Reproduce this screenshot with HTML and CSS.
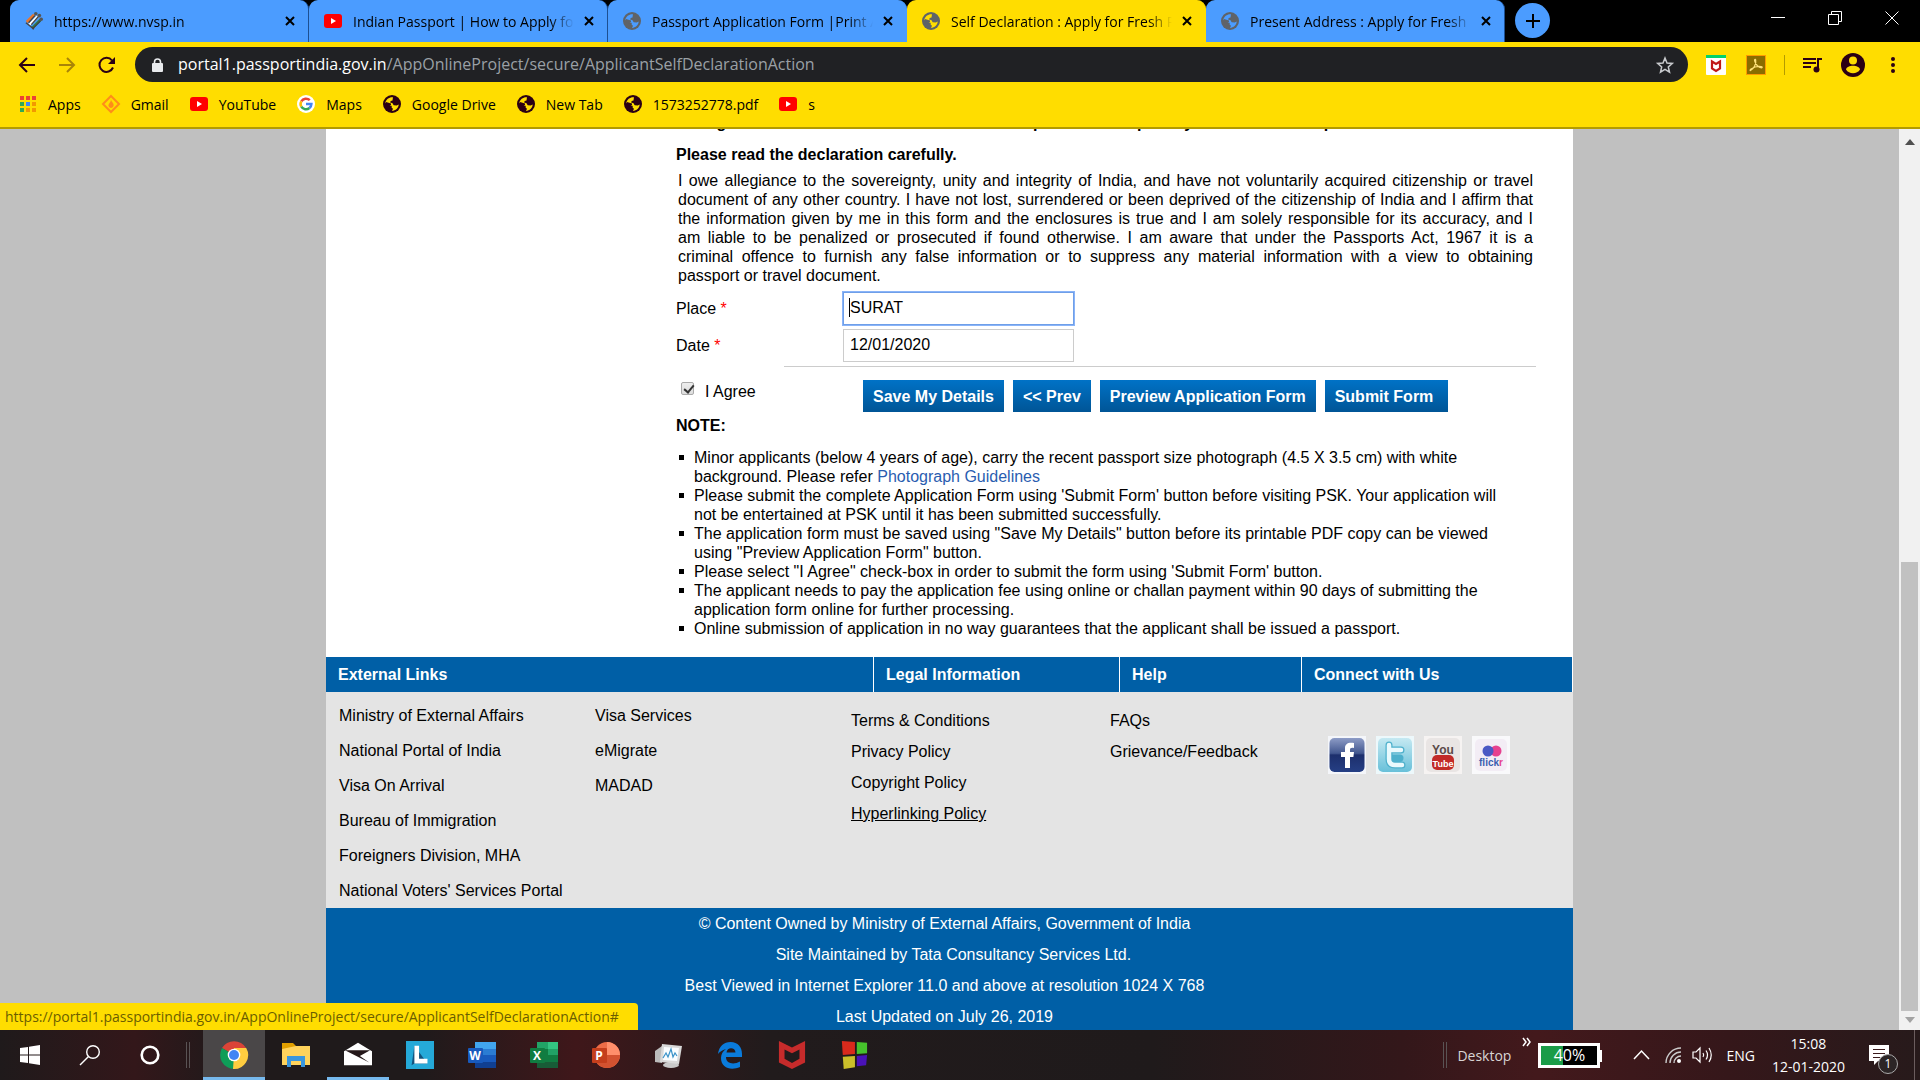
FILE: index.html
```html
<!DOCTYPE html>
<html lang="en">
<head>
<meta charset="utf-8">
<title>Self Declaration : Apply for Fresh Passport</title>
<link rel="stylesheet" href="styles.css">
</head>
<body>
<svg class="sprites" aria-hidden="true">
  <symbol id="globe" viewBox="0 0 18 18"><circle cx="9" cy="9" r="9" fill="currentColor"/><path class="land" d="M10 2.2C6.500 1.800 2.800 4 2.300 8l4 2.700h2.400v2l1.300 1-1 2.200c3.500 0 6.500-2.700 6.700-6.300l-2 .8-3-.2-1.400-2.200-2-.2.300-1.800 1.900-.6z"/><path fill="currentColor" d="M3 7l5 1.500V10L6 11.500 2 9z"/></symbol>
  <symbol id="youtube" viewBox="0 0 18 14"><rect width="18" height="14" rx="3" fill="#f00"/><path d="M7 4l5 3-5 3z" fill="#fff"/></symbol>
  <symbol id="cross" viewBox="0 0 10 10"><path d="M1 1l8 8M9 1L1 9" fill="none" stroke="currentColor" stroke-width="2"/></symbol>
</svg>

<header class="browser">
  <div class="tabstrip">
    <div class="tab first">
      <svg class="fav" viewBox="0 0 20 20"><g stroke-width="3" stroke-linecap="square"><path d="M3 10l6-6" stroke="#e8762d"/><path d="M6 13l7-7" stroke="#fff"/><path d="M9 17l7-7" stroke="#2e7d4f"/></g><g fill="none" stroke="#444" stroke-width="1.500"><path d="M1 12l9 7M8 19l9-9M4 12l7-8M7 14l8-9"/></g><circle cx="12" cy="2" r="2" fill="#555"/><circle cx="16" cy="4" r="2" fill="#555"/><circle cx="18" cy="8" r="2" fill="#555"/></svg>
      <span class="tab-title">https://www.nvsp.in</span>
      <button class="close" aria-label="Close tab"><svg><use href="#cross"/></svg></button>
    </div>
    <div class="tab">
      <svg class="fav"><use href="#youtube"/></svg>
      <span class="tab-title">Indian Passport | How to Apply for</span>
      <button class="close" aria-label="Close tab"><svg><use href="#cross"/></svg></button>
    </div>
    <div class="tab before-active">
      <svg class="fav grey"><use href="#globe"/></svg>
      <span class="tab-title">Passport Application Form |Print A</span>
      <button class="close" aria-label="Close tab"><svg><use href="#cross"/></svg></button>
    </div>
    <div class="tab active">
      <svg class="fav grey"><use href="#globe"/></svg>
      <span class="tab-title">Self Declaration : Apply for Fresh P</span>
      <button class="close" aria-label="Close tab"><svg><use href="#cross"/></svg></button>
    </div>
    <div class="tab">
      <svg class="fav grey"><use href="#globe"/></svg>
      <span class="tab-title">Present Address : Apply for Fresh P</span>
      <button class="close" aria-label="Close tab"><svg><use href="#cross"/></svg></button>
    </div>
    <button class="newtab" aria-label="New tab"><svg viewBox="0 0 16 16"><path d="M8 1v14M1 8h14" stroke="#000" stroke-width="2"/></svg></button>
    <div class="window-controls">
      <button aria-label="Minimize"><svg viewBox="0 0 14 14"><path d="M0 6.500h14"/></svg></button>
      <button aria-label="Restore"><svg viewBox="0 0 14 14"><path d="M.5 3.500h10v10H.5zM3.500 3.500v-3h10v10h-3"/></svg></button>
      <button aria-label="Close"><svg viewBox="0 0 14 14"><path d="M.5.5l13 13M13.500.5l-13 13"/></svg></button>
    </div>
  </div>

  <div class="toolbar">
    <button class="nav" aria-label="Back"><svg viewBox="0 0 16 16"><path d="M16 8H1.500M8 1L1 8l7 7"/></svg></button>
    <button class="nav dim" aria-label="Forward"><svg viewBox="0 0 16 16"><path d="M0 8h14.500M8 1l7 7-7 7"/></svg></button>
    <button class="nav" aria-label="Reload"><svg viewBox="0 0 16 16"><path d="M14 10.500A7 7 0 1 1 13 3.500"/><path d="M16 0v7H9z" fill="#2b0014" stroke="none"/></svg></button>
    <div class="omnibox">
      <svg class="lock" viewBox="0 0 11 14"><rect y="5" width="11" height="9" rx="1" fill="#e8eaed"/><path d="M2.500 6V4a3 3 0 0 1 6 0v2" fill="none" stroke="#e8eaed" stroke-width="1.600"/></svg>
      <span class="url"><b>portal1.passportindia.gov.in</b>/AppOnlineProject/secure/ApplicantSelfDeclarationAction</span>
      <svg class="star" viewBox="0 0 18 18"><path d="M9 2l2 5 5.300.4-4 3.500 1.200 5.200L9 13.300l-4.500 2.800 1.200-5.200-4-3.500L7 7z"/></svg>
    </div>
    <div class="extensions">
      <svg class="ext" viewBox="0 0 20 20"><rect width="20" height="20" rx="1" fill="#fff"/><path d="M0 0h20v3H0z" fill="#00d26a"/><path d="M6 6.500l4 2.500 4-2.500v7L10 16l-4-2.500z" fill="none" stroke="#c01818" stroke-width="2.200"/></svg>
      <svg class="ext" viewBox="0 0 20 20"><rect x=".5" y=".5" width="19" height="19" fill="#8a6d00" stroke="#f90"/><path d="M4.500 15.500C7.500 14 10.500 9 9.700 5c-.4-1.500-1.600-.5-1 1 1.300 4 3.500 6.500 6.800 6.800 1 0 1-1.200-.5-1.300-3.500-.3-7 .5-10 2.500-1.200 1-1 1.700-.5 1.500z" fill="none" stroke="#ffe27a" stroke-width="1.200"/></svg>
      <span class="rule"></span>
      <svg class="ext" viewBox="0 0 20 20"><path d="M0 4h13M0 8h13M0 12h8M15 14V4h4" fill="none" stroke="#2b0014" stroke-width="2"/><circle cx="13.500" cy="14.500" r="3" fill="#2b0014"/></svg>
      <svg class="profile" viewBox="0 0 24 24"><circle cx="12" cy="12" r="12" fill="#2b0014"/><circle cx="12" cy="7.500" r="4" fill="#fd0"/><path d="M5 16.500c1-5 13-5 14 0-3 5-11 5-14 0z" fill="#fd0"/></svg>
      <svg class="more" viewBox="0 0 4 18"><g fill="#2b0014"><circle cx="2" cy="3" r="2"/><circle cx="2" cy="9" r="2"/><circle cx="2" cy="15" r="2"/></g></svg>
    </div>
  </div>

  <nav class="bookmarks">
    <a href="#"><svg viewBox="0 0 18 18"><path fill="#ea4335" d="M1 1h4v4H1zM7 1h4v4H7zM13 1h4v4h-4z"/><path fill="#34a853" d="M1 7h4v4H1zM1 13h4v4H1z"/><path fill="#4285f4" d="M7 7h4v4H7z"/><path fill="#f29900" d="M13 7h4v4h-4zM7 13h4v4H7zM13 13h4v4h-4z"/></svg>Apps</a>
    <a href="#"><svg viewBox="0 0 18 18"><path d="M9 1l8 8-8 8-8-8z" fill="none" stroke="#ff8c1a" stroke-width="2"/><path d="M9 4c0 3 3.500 4 2.500 7-1 2.500-4 2.500-5 0C6 8.500 9 8 9 4z" fill="#ff8c1a"/></svg>Gmail</a>
    <a href="#"><svg><use href="#youtube"/></svg>YouTube</a>
    <a href="#"><svg viewBox="0 0 20 20"><circle cx="10" cy="10" r="10" fill="#fff"/><g fill="none" stroke-width="2.800"><path d="M14.200 5.800A6 6 0 0 0 4.800 7" stroke="#ea4335"/><path d="M4.800 7a6 6 0 0 0 0 6" stroke="#fbbc05"/><path d="M4.800 13a6 6 0 0 0 9 1.500" stroke="#34a853"/><path d="M13.800 14.500A6 6 0 0 0 16 10h-6" stroke="#4285f4"/></g></svg>Maps</a>
    <a href="#"><svg><use href="#globe"/></svg>Google Drive</a>
    <a href="#"><svg><use href="#globe"/></svg>New Tab</a>
    <a href="#"><svg><use href="#globe"/></svg>1573252778.pdf</a>
    <a href="#"><svg><use href="#youtube"/></svg>s</a>
  </nav>
</header>

<div class="viewport">
  <div class="scroller">
    <div class="page">
      <main class="declaration">
        <p class="bold">Wrong information furnished here shall attract punishment / penalty as mentioned in provision rules</p>
        <h2 class="bold">Please read the declaration carefully.</h2>
        <p class="oath">I owe allegiance to the sovereignty, unity and integrity of India, and have not voluntarily acquired citizenship or travel document of any other country. I have not lost, surrendered or been deprived of the citizenship of India and I affirm that the information given by me in this form and the enclosures is true and I am solely responsible for its accuracy, and I am&nbsp;liable to be penalized or prosecuted if found otherwise. I am aware that under the Passports Act, 1967 it is a criminal&nbsp;offence to furnish any false information or to suppress any material information with a view to obtaining passport&nbsp;or&nbsp;travel&nbsp;document.</p>
        <form>
          <div class="field">
            <label for="place">Place <em>*</em></label>
            <div class="control focused"><input id="place" type="text" value="SURAT"><i class="caret"></i></div>
          </div>
          <div class="field">
            <label for="date">Date <em>*</em></label>
            <div class="control"><input id="date" type="text" value="12/01/2020"></div>
          </div>
          <hr>
          <div class="actions">
            <label class="agree"><input type="checkbox" checked><span>I Agree</span></label>
            <div class="buttons">
              <button type="button">Save My Details</button>
              <button type="button">&lt;&lt; Prev</button>
              <button type="button">Preview Application Form</button>
              <button type="button">Submit Form&nbsp;</button>
            </div>
          </div>
        </form>
        <h3 class="bold">NOTE:</h3>
        <ul class="notes">
          <li>Minor applicants (below 4 years of age), carry the recent passport size photograph (4.5 X 3.5 cm) with white background. Please refer <a href="#">Photograph Guidelines</a></li>
          <li>Please submit the complete Application Form using 'Submit Form' button before visiting PSK. Your application will not&nbsp;be entertained at PSK until it has been submitted successfully.</li>
          <li>The application form must be saved using "Save My Details" button before its printable PDF copy can be viewed using "Preview Application Form" button.</li>
          <li>Please select "I Agree" check-box in order to submit the form using 'Submit Form' button.</li>
          <li>The applicant needs to pay the application fee using online or challan payment within 90 days of submitting the application form online for further processing.</li>
          <li>Online submission of application in no way guarantees that the applicant shall be issued a passport.</li>
        </ul>
      </main>

      <footer>
        <div class="foot-head">
          <h4>External Links</h4><h4>Legal Information</h4><h4>Help</h4><h4>Connect with Us</h4>
        </div>
        <div class="foot-links">
          <ul class="loose">
            <li><a href="#">Ministry of External Affairs</a></li>
            <li><a href="#">National Portal of India</a></li>
            <li><a href="#">Visa On Arrival</a></li>
            <li><a href="#">Bureau of Immigration</a></li>
            <li><a href="#">Foreigners Division, MHA</a></li>
            <li><a href="#">National Voters' Services Portal</a></li>
          </ul>
          <ul class="loose">
            <li><a href="#">Visa Services</a></li>
            <li><a href="#">eMigrate</a></li>
            <li><a href="#">MADAD</a></li>
          </ul>
          <ul>
            <li><a href="#">Terms &amp; Conditions</a></li>
            <li><a href="#">Privacy Policy</a></li>
            <li><a href="#">Copyright Policy</a></li>
            <li><a href="#" class="hovered">Hyperlinking Policy</a></li>
          </ul>
          <ul>
            <li><a href="#">FAQs</a></li>
            <li><a href="#">Grievance/Feedback</a></li>
          </ul>
          <div class="social">
            <a href="#" aria-label="Facebook"><svg viewBox="0 0 38 38"><defs><linearGradient id="fb" x2="0" y2="1"><stop offset="0" stop-color="#8d9cc6"/><stop offset=".45" stop-color="#42578f"/><stop offset=".5" stop-color="#1d2f6c"/><stop offset="1" stop-color="#253f85"/></linearGradient></defs><rect width="38" height="38" fill="#f4f6fa"/><rect x="1.500" y="2" width="35" height="34" rx="5" fill="url(#fb)"/><path d="M17 32V21h-4v-5h4v-4c0-4 3-6 9-5v5c-3-.5-4 0-4 2v2h4l-.6 5H22v11z" fill="#fff"/></svg></a>
            <a href="#" aria-label="Twitter"><svg viewBox="0 0 38 38"><defs><linearGradient id="tw" x2="0" y2="1"><stop offset="0" stop-color="#c5e9f2"/><stop offset="1" stop-color="#68c0d9"/></linearGradient></defs><rect width="38" height="38" fill="#edf8fb"/><rect x="2" y="2" width="34" height="34" rx="5" fill="url(#tw)"/><path d="M13 9v14q0 6 6 6h7M13 14h12M15 22h9" fill="none" stroke="#4db0cc" stroke-width="7" stroke-linecap="round"/><path d="M13 9v14q0 6 6 6h7M13 14h12" fill="none" stroke="#e9f9fd" stroke-width="4.500" stroke-linecap="round"/></svg></a>
            <a href="#" aria-label="YouTube"><svg viewBox="0 0 38 38"><rect width="38" height="38" fill="#f6f3f2"/><rect x="2" y="2" width="34" height="34" rx="5" fill="#e9e5e4"/><rect x="8" y="19" width="22" height="15" rx="5" fill="#c22a28"/><text x="19" y="18" class="yt-you">You</text><text x="19" y="31" class="yt-tube">Tube</text></svg></a>
            <a href="#" aria-label="Flickr"><svg viewBox="0 0 38 38"><rect width="38" height="38" fill="#f9f9fb"/><rect x="3" y="3" width="32" height="32" rx="5" fill="#f3edf5"/><circle cx="24" cy="15" r="5.500" fill="#e6418f"/><circle cx="16" cy="15" r="5.500" fill="#4a59c4"/><text x="19" y="30" class="flickr">flick<tspan fill="#e6418f">r</tspan></text></svg></a>
          </div>
        </div>
        <div class="foot-copy">
          <p>© Content Owned by Ministry of External Affairs, Government of India</p>
          <p>&nbsp;&nbsp;&nbsp;&nbsp;Site Maintained by Tata Consultancy Services Ltd.</p>
          <p>Best Viewed in Internet Explorer 11.0 and above at resolution 1024 X 768</p>
          <p>Last Updated on July 26, 2019</p>
        </div>
      </footer>
    </div>
  </div>
  <div class="scrollbar">
    <svg viewBox="0 0 10 6"><path d="M5 0l5 6H0z" fill="#505050"/></svg>
    <span class="thumb"></span>
    <svg viewBox="0 0 10 6"><path d="M5 6l5-6H0z" fill="#a3a3a3"/></svg>
  </div>
  <div class="status">https://portal1.passportindia.gov.in/AppOnlineProject/secure/ApplicantSelfDeclarationAction#</div>
</div>

<div class="taskbar">
  <div class="system">
    <button aria-label="Start"><svg viewBox="0 0 20 20"><path d="M0 3l8-1v7.500H0zM9 1.800L20 0v9.500H9zM0 10.500h8V18l-8-1zM9 10.500h11V20L9 18.200z" fill="#fff"/></svg></button>
    <button aria-label="Search"><svg viewBox="0 0 20 20"><circle cx="13" cy="7" r="6.300" fill="none" stroke="#fff" stroke-width="1.400"/><path d="M8.500 11.500L0 20" stroke="#fff" stroke-width="1.500"/></svg></button>
    <button aria-label="Cortana"><svg viewBox="0 0 20 20"><circle cx="10" cy="10" r="8.300" fill="none" stroke="#fff" stroke-width="2.600"/></svg></button>
  </div>
  <span class="grip"></span>
  <div class="apps">
    <button class="running current" aria-label="Chrome"><svg viewBox="0 0 28 28"><path d="M14 14L2 7a14 14 0 0 1 24.100 0z" fill="#db4437"/><path d="M14 14L2 7a14 14 0 0 0 12 21z" fill="#0f9d58"/><path d="M14 14l-1 14A14 14 0 0 0 26.200 7H14z" fill="#ffcd40"/><circle cx="14" cy="14" r="6.300" fill="#fff"/><circle cx="14" cy="14" r="5" fill="#4285f4"/></svg></button>
    <button aria-label="File Explorer"><svg viewBox="0 0 28 28"><path d="M0 2h11l3 3v4H0z" fill="#e09f00"/><path d="M0 8l14-3h14v19H0z" fill="#ffd35c"/><path d="M5 26V15h18v11h-4v-6H9v6z" fill="#3a96dd"/></svg></button>
    <button class="running" aria-label="Mail"><svg viewBox="0 0 30 30"><path d="M0 11l15-9 15 9v15H0z" fill="#fff"/><path d="M2 10h26l-11 6 10 7L1 10z" fill="#241719"/></svg></button>
    <button aria-label="Lenovo"><svg viewBox="0 0 30 30"><path d="M0 0h30v30H0z" fill="#25a9d8"/><path d="M9 5L6 26l3-2h14z" fill="#12537d"/><path d="M9 5h5v14h9v5H9z" fill="#fff"/></svg></button>
    <button aria-label="Word"><svg viewBox="0 0 28 28"><path d="M7 1h21v7H7z" fill="#41a5ee"/><path d="M7 8h21v6H7z" fill="#2b7cd3"/><path d="M7 14h21v7H7z" fill="#185abd"/><path d="M7 21h21v6H7z" fill="#103f91"/><rect y="7" width="15" height="15" rx="1" fill="#185abd"/><text x="7" y="19" class="glyph">W</text></svg></button>
    <button aria-label="Excel"><svg viewBox="0 0 28 28"><path d="M7 1h11v7H7z" fill="#21a366"/><path d="M18 1h10v7H18z" fill="#33c481"/><path d="M7 8h11v13H7z" fill="#107c41"/><path d="M18 8h10v6H18z" fill="#21a366"/><path d="M18 14h10v7H18z" fill="#107c41"/><path d="M7 21h21v6H7z" fill="#185c37"/><rect y="7" width="15" height="15" rx="1" fill="#107c41"/><text x="7" y="19" class="glyph">X</text></svg></button>
    <button aria-label="PowerPoint"><svg viewBox="0 0 28 28"><circle cx="15" cy="14" r="13" fill="#ed6c47"/><path d="M15 1a13 13 0 0 1 13 13H15z" fill="#ff8f6b"/><path d="M2 14h26a13 13 0 0 1-26 0z" fill="#d35230"/><rect y="7" width="15" height="15" rx="1" fill="#c43e1c"/><text x="7" y="19" class="glyph">P</text></svg></button>
    <button aria-label="System Monitor"><svg viewBox="0 0 28 28"><path d="M1 10l7-5v17l-7-1z" fill="#bbb"/><ellipse cx="17" cy="24" rx="8" ry="3" fill="#c9c9c9"/><path d="M8 3l20 2-3 18-19-2z" fill="#d9d9d9"/><path d="M10 6l15 1-2 13-14-1z" fill="#fafdff"/><path d="M9 17l3-5 2 4 3-8 2 8 2-4 2 3" fill="none" stroke="#3b93c9" stroke-width="1.200"/></svg></button>
    <button aria-label="Edge"><svg viewBox="0 0 28 28"><path d="M2 13C3 5 8 1 14.500 1 22 1 26 6 26 13v3H10c0 7 8 8 14 4.500V26c-9 4-19 1-19-9 0-4 2-7 5-9-4 1-6.500 3-8 5zM10.500 11.500h9C19.500 6 11 5.500 10.500 11.500z" fill="#0a7bdb"/></svg></button>
    <button aria-label="McAfee"><svg viewBox="0 0 28 30"><path d="M0 0l14 7 14-7v23l-14 7-14-7zM6 9v10l8 4.500 8-4.500V9l-8 4z" fill="#c62b2b" fill-rule="evenodd"/></svg></button>
    <button aria-label="Colour panes"><svg viewBox="0 0 28 30"><path d="M1 0l14 1v13L2 15z" fill="#d92a1c"/><path d="M17 1l11 1v11l-11 1z" fill="#46c22c"/><path d="M2 17l13-1v12L3 30z" fill="#cabf2a"/><path d="M17 16l11-1-1 11-10 1z" fill="#4a12b8"/></svg></button>
  </div>
  <div class="tray">
    <span class="grip"></span>
    <span class="desktop">Desktop</span>
    <svg class="chevrons" viewBox="0 0 9 8"><path d="M1 0l3 4-3 4M5 0l3 4-3 4" fill="none" stroke="#fff" stroke-width="1.500"/></svg>
    <span class="battery"><span>40%</span></span>
    <svg class="up" viewBox="0 0 17 10"><path d="M1 9l7.500-8L16 9" fill="none" stroke="#fff" stroke-width="1.500"/></svg>
    <svg class="wifi" viewBox="0 0 16 16"><g fill="none" stroke="#ccc" stroke-width="1.400"><path d="M1 16A15 15 0 0 1 16 1M5 16A11 11 0 0 1 16 5M9 16a7 7 0 0 1 7-7"/></g><circle cx="14" cy="14" r="2" fill="#fff"/></svg>
    <svg class="volume" viewBox="0 0 20 18"><g fill="none" stroke="#fff" stroke-width="1.200"><path d="M1 6h3l4-4v14l-4-4H1z"/><path d="M11 7q1.500 2 0 4M14 4.500q3 4.500 0 9M17 2q4.500 7 0 14"/></g></svg>
    <span>ENG</span>
    <span class="clock"><span>15:08</span><span>12-01-2020</span></span>
    <span class="notify"><svg viewBox="0 0 20 20"><path d="M0 0h20v16H9l-4 4v-4H0z" fill="#fff"/><path d="M4 4.500h12M4 8.500h12M4 12.500h7" stroke="#3a1a1c" stroke-width="1.200"/></svg><i>1</i></span>
    <span class="peek"></span>
  </div>
</div>
</body>
</html>
```
FILE: styles.css
```css
* { box-sizing: border-box; }
body {
  margin: 0;
  height: 100vh;
  display: flex;
  flex-direction: column;
  overflow: hidden;
  font: 16px/19px "Liberation Sans", Arial, sans-serif;
  color: #000;
}
button { border: 0; padding: 0; background: none; font: inherit; color: inherit; }
svg { display: block; flex: none; overflow: visible; }
h2, h3, h4, p, ul { margin: 0; padding: 0; font-size: 16px; }
ul { list-style: none; }
a { color: inherit; text-decoration: none; }
.sprites { width: 0; height: 0; position: absolute; }

/* browser frame */
.browser, .status, .taskbar { font-family: "Open Sans", "Noto Sans", sans-serif; font-size: 14px; }
.browser { flex: none; background: #fd0; border-bottom: 2px solid #b39b00; }
.tabstrip { display: flex; height: 42px; padding-left: 10px; background: #000; }
.tab {
  --land: #4b9cff;
  flex: 0 1 299px;
  min-width: 0;
  display: flex;
  align-items: center;
  padding: 0 13px 0 15px;
  background: #4b9cff;
  border-radius: 9px 9px 0 0;
  border-right: 1px solid #1d4f91;
}
.tab.before-active { border-right-color: #4b9cff; }
.tab.active { --land: #fd0; background: #fd0; border-right-color: #fd0; }
.fav { width: 18px; height: 18px; }
.grey { color: #5f6368; }
.land { fill: var(--land); }
.tab-title {
  flex: 1;
  min-width: 0;
  margin: 0 10px 0 11px;
  overflow: hidden;
  white-space: nowrap;
  mask-image: linear-gradient(to left, transparent 0, #000 24px);
}
.close, .close svg { width: 10px; height: 10px; }
.newtab {
  width: 35px;
  height: 35px;
  margin: 3px 0 0 10px;
  display: grid;
  place-items: center;
  border-radius: 50%;
  background: #4b9cff;
}
.newtab svg { width: 16px; height: 16px; }
.window-controls { margin-left: auto; display: flex; }
.window-controls button { width: 57px; height: 36px; display: grid; place-items: center; }
.window-controls svg { width: 14px; height: 14px; fill: none; stroke: #fff; stroke-width: 1; }

.toolbar { display: flex; align-items: center; height: 45px; padding: 0 25px 0 19px; }
.nav { width: 16px; margin-right: 24px; }
.nav svg { width: 16px; height: 16px; fill: none; stroke: #2b0014; stroke-width: 2; }
.dim { opacity: .4; }
.omnibox {
  flex: 1;
  display: flex;
  align-items: center;
  height: 35px;
  margin: 0 18px 0 -4px;
  padding: 0 14px 0 17px;
  border-radius: 18px;
  background: #202124;
  color: #9aa0a6;
  font-size: 16px;
}
.lock { width: 11px; height: 14px; margin-right: 15px; }
.url { flex: 1; white-space: nowrap; }
.url b { color: #fff; font-weight: 400; }
.star { width: 18px; height: 18px; fill: none; stroke: #c8cacd; stroke-width: 1.500; }
.extensions { display: flex; align-items: center; gap: 18px; }
.ext { width: 20px; height: 20px; }
.ext + .ext { margin-left: 2px; }
.rule { width: 1px; height: 20px; background: #b39b00; }
.profile { width: 24px; height: 24px; }
.more { width: 4px; height: 18px; margin-left: 8px; }
.bookmarks { --land: #fd0; display: flex; gap: 21px; height: 40px; padding: 0 19px 6px; align-items: center; }
.bookmarks a { display: flex; align-items: center; gap: 11px; }
.bookmarks svg { width: 18px; height: 18px; color: #2b0014; }

/* page area */
.viewport { flex: 1; min-height: 0; display: flex; position: relative; overflow: hidden; background: #c0c0c0; }
.scroller { flex: 1; min-width: 0; display: flex; flex-direction: column; justify-content: flex-end; align-items: center; }
.page { width: 100%; max-width: 1247px; flex: none; background: #fff; }
.declaration { padding: 0 37px 19px 350px; }
.bold { font-weight: 700; }
.declaration h2 { margin-top: 13px; }
.oath { margin: 7px 3px 0 2px; text-align: justify; }
.field { display: flex; align-items: center; height: 37px; }
.field label { width: 167px; }
.field em { color: #f00; font-style: normal; }
.control { position: relative; }
.control input {
  display: block;
  width: 231px;
  height: 33px;
  padding: 0 6px 2px;
  border: 1px solid #ccc;
  background: #fff;
  font: inherit;
  color: #000;
}
.focused input { border-color: #6f9fe8; outline: 1px solid #8ab4f8; }
.caret { position: absolute; left: 6px; top: 6px; width: 1px; height: 19px; background: #000; }
form { padding-top: 5px; }
hr { margin: 2px 0 0 108px; border: 0; border-top: 1px solid #ccc; }
.actions { display: flex; align-items: flex-start; padding-top: 13px; }
.agree { display: flex; width: 187px; }
.agree input {
  appearance: none;
  width: 13px;
  height: 13px;
  margin: 2px 11px 0 5px;
  border: 1px solid #aaa;
  border-radius: 2px;
  background: linear-gradient(#eee, #ddd);
}
.agree input::after {
  content: "";
  display: block;
  width: 4px;
  height: 8px;
  margin: 0 0 0 4px;
  border: solid #333;
  border-width: 0 2px 2px 0;
  rotate: 40deg;
}
.agree span { padding-top: 2px; }
.buttons { display: flex; gap: 9px; }
.buttons button {
  height: 32px;
  padding: 0 10px;
  background: linear-gradient(#0072c6, #005596);
  color: #fff;
  font-weight: 700;
}
.declaration h3 { margin: 4px 0 13px; }
.notes li { position: relative; padding: 0 0 0 18px; margin-right: 14px; }
.notes li::before { content: ""; position: absolute; left: 3px; top: 7px; width: 5px; height: 5px; background: #000; }
.notes a { color: #2a5db0; }

.foot-head { display: grid; grid-template-columns: 548px 246px 182px 1fr; gap: 0; height: 35px; background: #005fa6; color: #fff; }
.foot-head h4 { padding: 8px 12px; border-right: 1px solid #fff; }
.foot-links {
  display: grid;
  grid-template-columns: 256px 256px 259px 218px 1fr;
  padding: 6px 0 0 13px;
  height: 216px;
  background: #e4e4e4;
}
.foot-links ul { padding-top: 7px; }
.foot-links li { line-height: 31px; }
.foot-links .loose { padding-top: 0; }
.foot-links .loose li { line-height: 35px; }
.hovered { text-decoration: underline; }
.social { display: flex; gap: 10px; padding-top: 38px; }
.social svg { width: 38px; height: 38px; }
.social text { text-anchor: middle; font-family: "Liberation Sans", sans-serif; font-weight: 700; }
.yt-you { font-size: 12px; fill: #5a4a48; }
.yt-tube { font-size: 9px; fill: #fff; }
.flickr { font-size: 10px; fill: #3a5fb0; }
.foot-copy { background: #005fa6; color: #fff; text-align: center; line-height: 31px; height: 122px; padding-right: 10px; }

.scrollbar { width: 21px; flex: none; display: flex; flex-direction: column; align-items: center; padding: 10px 0 7px; background: #f1f1f1; }
.scrollbar svg { width: 10px; height: 6px; }
.thumb { width: 17px; height: 449px; margin: auto 0 6px; background: #c1c1c1; }
.status {
  position: absolute;
  left: 0;
  bottom: 0;
  height: 27px;
  padding: 0 19px 0 5px;
  line-height: 27px;
  background: #fd0;
  color: #6b5d00;
  border-top-right-radius: 4px;
}

/* taskbar */
.taskbar {
  flex: none;
  display: flex;
  align-items: center;
  height: 50px;
  color: #fff;
  background: linear-gradient(90deg, #1f1a1b 0, #33171a 7%, #1f1a1b 12%, #1f1a1b 22%, #3f171a 30%, #211b1c 40%, #1f1a1b 60%, #33171a 73%, #43191c 80%, #35171a 90%, #271a1b 100%);
}
.system { display: flex; }
.system button { width: 60px; display: grid; place-items: center; }
.system svg { width: 20px; height: 20px; }
.grip { width: 4px; height: 26px; margin: 0 13px 0 6px; border: solid #5a5354; border-width: 0 1px; }
.apps { display: flex; height: 50px; }
.apps button { width: 62px; display: grid; place-items: center; border-bottom: 3px solid transparent; padding-top: 3px; }
.apps svg { width: 28px; height: 28px; }
.apps .running { border-bottom-color: #76b9ed; }
.apps .current { background: #4a4748; }
.glyph { font: 700 12px "Open Sans", sans-serif; fill: #fff; text-anchor: middle; }
.tray { margin-left: auto; display: flex; align-items: center; padding-right: 5px; }
.tray .grip { margin: 0 10px 0 0; }
.desktop { color: #d8d4d4; }
.chevrons { width: 9px; height: 8px; margin: -26px 7px 0 11px; }
.battery {
  position: relative;
  width: 62px;
  height: 25px;
  margin-right: 33px;
  border: 3px solid #fff;
  background: linear-gradient(90deg, #1a9c48 40%, #000 40%);
  font-size: 16px;
  text-align: center;
}
.battery::after { content: ""; position: absolute; right: -5px; top: 4px; width: 2px; height: 12px; background: #fff; }
.up { width: 17px; height: 10px; margin-right: 15px; }
.wifi { width: 16px; height: 16px; margin-right: 11px; }
.volume { width: 20px; height: 18px; margin-right: 14px; }
.clock { display: flex; flex-direction: column; align-items: center; margin: 0 24px 0 17px; line-height: 23px; }
.notify { position: relative; }
.notify svg { width: 20px; height: 20px; }
.notify i {
  position: absolute;
  left: 9px;
  top: 9px;
  width: 20px;
  height: 20px;
  border: 1px solid #aaa;
  border-radius: 50%;
  background: #2c2526;
  font: 12px/18px "Open Sans", sans-serif;
  text-align: center;
}
.peek { width: 1px; height: 50px; margin-left: 25px; background: #6b5d5e; }
```
